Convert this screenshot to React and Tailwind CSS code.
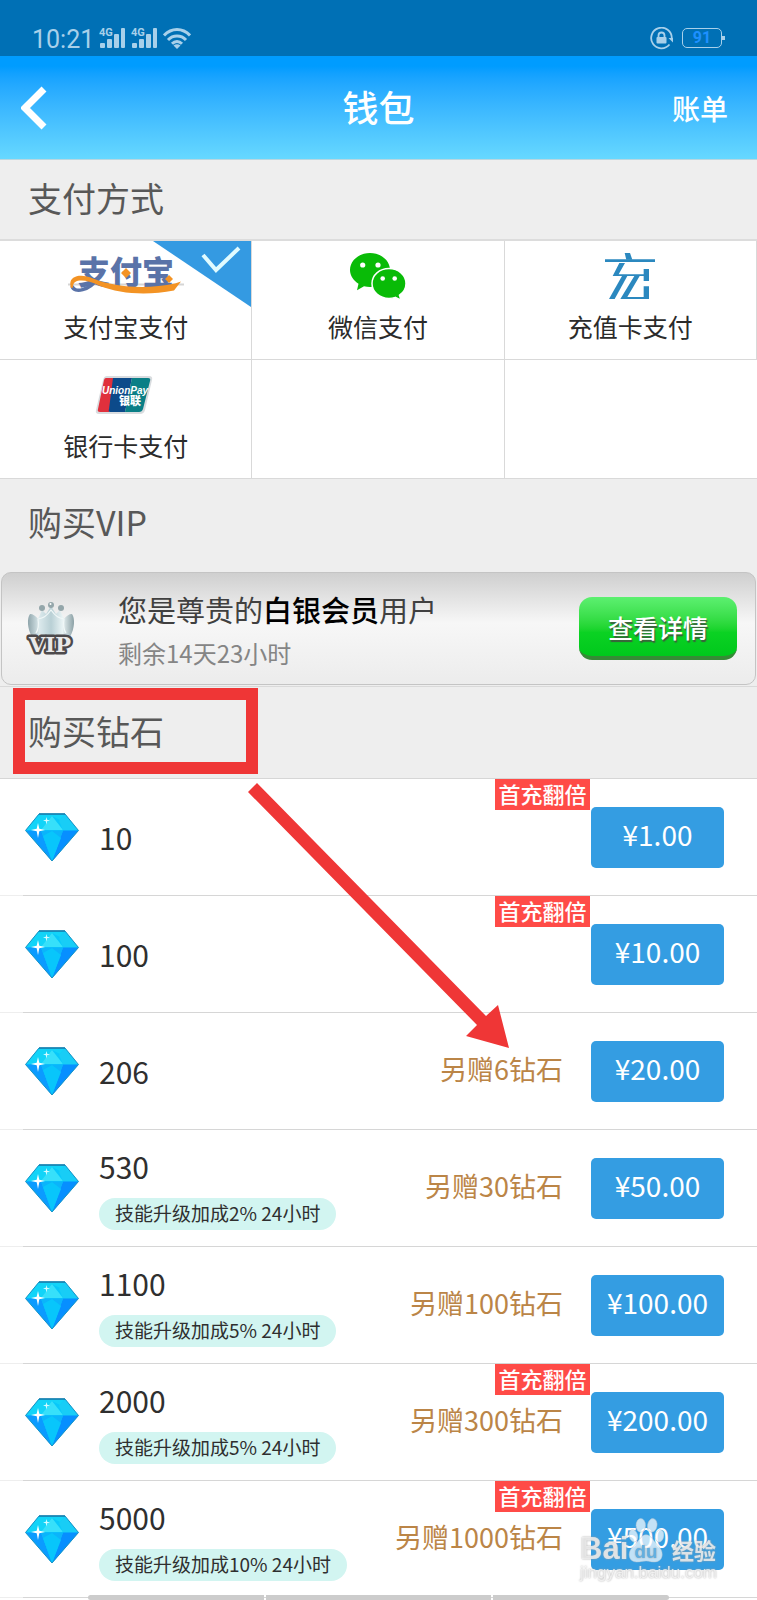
import { useState } from 'react';

const PACKAGES = [
  { amount: 10, price: '1.00', double: true },
  { amount: 100, price: '10.00', double: true },
  { amount: 206, price: '20.00', gift: 6 },
  { amount: 530, price: '50.00', gift: 30, boost: 2 },
  { amount: 1100, price: '100.00', gift: 100, boost: 5 },
  { amount: 2000, price: '200.00', gift: 300, boost: 5, double: true },
  { amount: 5000, price: '500.00', gift: 1000, boost: 10, double: true },
];

function Signal() {
  return (
    <svg width="27" height="21" viewBox="0 0 27 21" fill="currentColor" aria-hidden="true">
      <text x="0" y="8" fontSize="11" fontWeight="700" fontFamily="Roboto, sans-serif">4G</text>
      <rect x="1" y="15" width="5" height="5" rx="1" />
      <rect x="8" y="11" width="5" height="9" rx="1" />
      <rect x="15" y="6" width="5" height="14" rx="1" />
      <rect x="22" y="0" width="4" height="20" rx="1" />
    </svg>
  );
}

function Wifi() {
  return (
    <svg width="28" height="21" viewBox="0 0 28 21" fill="none" stroke="currentColor" strokeWidth="3" aria-hidden="true">
      <path d="M1 7.500C8.500-.5 19.500-.5 27 7.500" />
      <path d="M5 12c5-5.200 13-5.200 18 0" />
      <path d="M9 15.800c3-3 7-3 10 0" />
      <path d="M10.500 17.500c2-1.600 5-1.600 7 0L14 21z" fill="currentColor" stroke="none" />
    </svg>
  );
}

function RotationLock() {
  return (
    <svg width="23" height="23" viewBox="0 0 23 23" fill="none" stroke="currentColor" aria-hidden="true">
      <path d="M19.500 17.500A10.300 10.300 0 1 1 21.800 11" strokeWidth="1.800" />
      <path d="M18.500 11h4.500v4.500z" fill="currentColor" stroke="none" />
      <path d="M8.500 11V8.500a3 3 0 0 1 6 0V11" strokeWidth="1.800" />
      <rect x="6.500" y="10" width="10" height="6.500" rx="1" fill="currentColor" stroke="none" />
    </svg>
  );
}

function AlipayLogo() {
  return (
    <svg width="116" height="52" viewBox="0 -6 116 52" aria-hidden="true">
      <path d="M0 28.500h116" stroke="#d5d5d5" strokeWidth="2" />
      <text x="10" y="28" fontSize="32" fontWeight="900" fill="#5a73a8" fontFamily="'Noto Sans CJK SC', sans-serif">支付宝</text>
      <path d="M29 23C22 34 6 38 4 30" fill="none" stroke="#5a73a8" strokeWidth="3.500" />
      <path d="M3 32C-1 20 12 17 25 22.500c22 9 54 11 82 5l6-2-7 9c-26 5-53 4-75-5-14-7-27-7-26 2z" fill="#f39324" />
      <path d="M58 12l5 5-5 5-5-5zM101 19l4 4-4 4-4-4z" fill="#f39324" />
    </svg>
  );
}

function WechatLogo() {
  return (
    <svg width="58" height="48" viewBox="348 251 58 48" aria-hidden="true">
      <path d="M369 252c11 0 20 7.500 20 17s-9 17-20 17c-2 0-4-.2-6-.8l-7 4 1.500-6.500c-5-3-8.500-8-8.500-13.700 0-9.500 9-17 20-17z" fill="#09bb07" />
      <path d="M388 267.500c9.500 0 17 6.600 17 15 0 4.800-2.500 9-6.500 11.700l1.500 5-5.700-2.800c-2 .7-4.200 1.100-6.300 1.100-9.500 0-17-6.600-17-15s7.500-15 17-15z" fill="#09bb07" stroke="#fff" strokeWidth="1.500" />
      <circle cx="361.700" cy="264" r="2.600" fill="#fff" />
      <circle cx="377" cy="264" r="2.600" fill="#fff" />
      <circle cx="381.700" cy="277.500" r="2.300" fill="#fff" />
      <circle cx="393.700" cy="277.500" r="2.300" fill="#fff" />
    </svg>
  );
}

function CardLogo() {
  return (
    <svg width="50" height="46" viewBox="684 48 150 138" fill="#2b88bf" aria-hidden="true">
      <path d="M743 48h16l7 20h-18z" />
      <path d="M684 67h150v8H684z" />
      <path d="M727 78h17l-19 34h75V96h16v36h-16v-15h-93z" />
      <path d="M735 117h16l-38 69h-17z" />
      <path d="M772 117h16l-37 63h49v-32h16v38h-86z" />
    </svg>
  );
}

function UnionPayLogo() {
  return (
    <svg width="58" height="38" viewBox="0 0 58 38" className="mr-1" aria-hidden="true">
      <path d="M12 0h42q4 0 3 4l-7 30q-1 4-5 4H4q-4 0-3-4L8 4q1-4 4-4z" fill="#d9dcdf" />
      <path d="M11 2h10l-7 34H5q-3 0-2-3L9 4q.5-2 2-2z" fill="#e0303c" />
      <path d="M18 2h19l-7 34H15q-2 0-1-3z" fill="#0c4a8a" />
      <path d="M37 2h16q3 0 2 3l-7 28q-1 3-4 3H30z" fill="#0a7f86" />
      <text x="7" y="18" fontSize="10" fontWeight="700" fontStyle="italic" fill="#fff" fontFamily="'Liberation Sans', sans-serif">UnionPay</text>
      <text x="24" y="29" fontSize="11" fontWeight="900" fill="#fff" fontFamily="'Noto Sans CJK SC', sans-serif">银联</text>
    </svg>
  );
}

function CrownIcon() {
  return (
    <svg width="52" height="56" viewBox="0 0 52 56" className="shrink-0" aria-hidden="true">
      <defs>
        <linearGradient id="crown" x1="0" x2="1" y1="0" y2="0">
          <stop offset="0" stopColor="#8fa5ab" />
          <stop offset=".25" stopColor="#dbe9ec" />
          <stop offset=".5" stopColor="#b9d0d5" />
          <stop offset=".75" stopColor="#e9f3f4" />
          <stop offset="1" stopColor="#8ba0a5" />
        </linearGradient>
      </defs>
      <path d="M8 36C3 27 3 17 6 13c3 0 6 2 8 5l4-9 4 4 5-8 5 8 4-4 4 9c2-3 5-5 8-5 3 4 3 14-2 23z" fill="url(#crown)" />
      <path d="M14 18c1 6 0 11-2 14M40 18c-1 6 0 11 2 14M14 18c5-1 8-2 13-9 5 7 8 8 13 9" stroke="#f1f8f8" strokeWidth="1.200" fill="none" />
      <circle cx="18" cy="7" r="3" fill="#94a6aa" />
      <circle cx="27" cy="4" r="3" fill="#94a6aa" />
      <circle cx="37" cy="7" r="3" fill="#94a6aa" />
      <circle cx="26.500" cy="3" r="1" fill="#fff" />
      <text x="26" y="51" textAnchor="middle" fontSize="21" fontWeight="700" fill="#e9e9e9" stroke="#4d4a4c" strokeWidth="5" strokeLinejoin="round" paintOrder="stroke" fontFamily="'DejaVu Serif', serif">VIP</text>
    </svg>
  );
}

function Diamond() {
  return (
    <svg width="54" height="49" viewBox="0 0 54 49" className="shrink-0" aria-hidden="true">
      <path d="M14 1h26l13.500 16.500L27 48 .5 17.500z" fill="#08c8fa" />
      <path d="M14 1h26l-5 6-8-4-11 14H1z" fill="#12d4f8" />
      <path d="M27 3l11 14H16z" fill="#37e0fa" />
      <path d="M40 1l13 16.500H38L34 8z" fill="#18cdf6" />
      <path d="M1 17.500h15L27 48z" fill="#0b9bff" />
      <path d="M38 17.500h15.500L27 48z" fill="#078fff" />
      <path d="M16 17.500h22L27 48z" fill="#0bb4fb" />
      <path d="M27 18l9 7-9 23-9-25z" fill="#08c6fb" />
      <path d="M14 1h26l13.500 16.500L27 48 .5 17.500z" fill="none" stroke="#1b93c4" strokeWidth="1" />
      <path d="M14 1h26" stroke="#177fae" strokeWidth="1.500" />
      <path d="M13 10l1.300 5.700L20 17l-5.700 1.300L13 25l-1.300-6.700L6 17l5.700-1.300z" fill="#fff" />
      <path d="M21.500 4l.7 2.800L25 7.500l-2.800.7-.7 3.300-.7-3.300-2.800-.7 2.800-.7z" fill="#d8fbff" />
    </svg>
  );
}

const METHODS = [
  { id: 'alipay', label: '支付宝支付', Logo: AlipayLogo },
  { id: 'wechat', label: '微信支付', Logo: WechatLogo },
  { id: 'card', label: '充值卡支付', Logo: CardLogo },
  { id: 'bank', label: '银行卡支付', Logo: UnionPayLogo },
];

function StatusBar() {
  return (
    <div className="h-14 bg-[#0070b5] pt-[22px] px-8 flex items-start justify-between text-[#a8d0ea]">
      <div className="h-8 flex items-center gap-[5px]">
        <span className="font-[Roboto] text-[25px] leading-8 pt-1">10:21</span>
        <Signal />
        <Signal />
        <Wifi />
      </div>
      <div className="h-8 flex items-center gap-[9px]">
        <RotationLock />
        <div className="flex items-center">
          <span className="w-10 h-5 rounded-[5px] border border-[#a8d0ea] flex items-center justify-center font-[Roboto] font-bold text-base leading-4 text-[#1e90ff]">
            91
          </span>
          <span className="w-[3px] h-1 bg-[#a8d0ea]" />
        </div>
      </div>
    </div>
  );
}

function PackageRow({ item }) {
  return (
    <li className="bg-white">
      <div className="relative h-[116px] pl-[25px] pr-[33px] flex items-center">
        <Diamond />
        <div className="flex-1 pl-5 flex flex-col items-start">
          <span className="text-[30px] leading-10 text-[#2f2f2f]">{item.amount}</span>
          {item.boost && (
            <span className="mt-3 h-8 px-4 rounded-full bg-[#d2f5f1] text-[19px] leading-[30px] text-[#2f2f2f] whitespace-nowrap">
              技能升级加成{item.boost}% 24小时
            </span>
          )}
        </div>
        {item.gift && (
          <span className="mr-7 pb-1 text-[27px] leading-9 text-[#bb8547] whitespace-nowrap">另赠{item.gift}钻石</span>
        )}
        <button type="button" className="w-[133px] h-[61px] rounded-[5px] bg-[#349de2] text-[28px] leading-9 text-white pb-[6px]">
          ¥{item.price}
        </button>
        {item.double && (
          <span className="absolute top-0 right-[167px] w-[95px] h-[31px] bg-[#ff4b47] text-[22px] leading-7 font-medium text-center text-white whitespace-nowrap">
            首充翻倍
          </span>
        )}
      </div>
      <div className="h-px flex">
        <span className="w-[23px] bg-[#eeeeee]" />
        <span className="flex-1 bg-[#d6d6d6]" />
      </div>
    </li>
  );
}

export default function App() {
  const [method, setMethod] = useState('alipay');

  return (
    <div className="relative min-h-screen bg-white font-['Noto_Sans_CJK_SC',sans-serif]">
      <StatusBar />

      <header className="h-[104px] px-[21px] grid grid-cols-3 items-center bg-linear-to-b from-[#009cff] from-10% to-[#66d8ff] border-b border-[#b9d7e0] text-white">
        <button type="button" aria-label="返回" className="justify-self-start">
          <svg width="26" height="44" viewBox="0 0 26 44" fill="none" stroke="#fff" strokeWidth="7">
            <path d="M23 3L4 22l19 19" />
          </svg>
        </button>
        <h1 className="pb-1 text-4xl font-medium text-center">钱包</h1>
        <button type="button" className="justify-self-end mr-2 text-[28px] leading-10 font-medium">账单</button>
      </header>

      <main>
        <h2 className="h-[81px] pl-7 pb-1 flex items-center bg-[#eeeeee] border-b-2 border-[#dcdcdc] text-[34px] leading-10 text-[#585858]">
          支付方式
        </h2>

        {/* Payment methods */}
        <div className="grid grid-cols-3">
          {METHODS.map(({ id, label, Logo }) => (
            <button
              key={id}
              type="button"
              aria-pressed={method === id}
              onClick={() => setMethod(id)}
              className="relative h-[119px] pb-1 flex flex-col items-center border-r border-b border-[#d9d9d9]"
            >
              <span className="h-[70px] flex items-center">
                <Logo />
              </span>
              <span className="text-[25px] leading-[30px] text-[#2b2b2b]">{label}</span>
              {method === id && (
                <svg width="98" height="66" viewBox="0 0 98 66" className="absolute top-0 right-0" aria-hidden="true">
                  <path d="M0 0h98v66z" fill="#349ae2" />
                  <path d="M50 14l13 15 23-22" fill="none" stroke="#e0fbff" strokeWidth="4" />
                </svg>
              )}
            </button>
          ))}
          <div className="border-r border-b border-[#d9d9d9]" />
          <div className="border-b border-[#d9d9d9]" />
        </div>

        <h2 className="h-[93px] pl-7 pb-2 flex items-center bg-[#eeeeee] text-[34px] leading-10 text-[#585858]">
          购买VIP
        </h2>

        {/* Membership card */}
        <section className="bg-[#eeeeee] pb-px border-b border-[#d9d9d9]">
          <div className="h-[113px] mx-px pl-[22px] pr-[18px] flex items-center rounded-[10px] border border-[#c4c4c4] bg-linear-to-b from-[#cfcfcf] via-[#f7f7f7] via-45% to-[#ececec]">
            <CrownIcon />
            <div className="flex-1 pl-[42px] pt-1">
              <p className="text-[29px] leading-10 text-[#404040] whitespace-nowrap">
                您是尊贵的<span className="font-medium text-black">白银会员</span>用户
              </p>
              <p className="mt-1 text-2xl leading-10 text-[#858585] whitespace-nowrap">剩余14天23小时</p>
            </div>
            <button
              type="button"
              className="w-[158px] h-[63px] rounded-[13px] border-b-4 border-[#368a36] bg-linear-to-b from-[#5cf070] via-[#0bd223] via-60% to-[#00c81c] text-[25px] leading-9 font-medium text-white text-shadow-[1px_2px_1px_#3d5c3d]"
            >
              查看详情
            </button>
          </div>
        </section>

        <div className="relative bg-[#eeeeee] border-b border-[#d6d6d6]">
          <h2 className="h-[91px] pl-7 pb-1 flex items-center text-[34px] leading-10 text-[#585858]">购买钻石</h2>
          {/* Guide frame and arrow drawn over the list */}
          <div className="absolute left-[13px] top-px w-[245px] h-[86px] border-[12px] border-[#ef3636] z-10 pointer-events-none" />
          <svg width="262" height="266" viewBox="0 0 262 266" className="absolute left-[248px] top-[96px] z-10 pointer-events-none" aria-hidden="true">
            <path d="M9 0l229 233 12-11 11 43-43-12 11-11L0 9z" fill="#ef3636" />
          </svg>
        </div>

        {/* Diamond packages */}
        <ul>
          {PACKAGES.map((item) => (
            <PackageRow key={item.amount} item={item} />
          ))}
        </ul>
      </main>

      <div className="fixed bottom-0 inset-x-0 px-[88px] h-[5px] flex gap-[2px]">
        <span className="flex-[176] rounded-l-full bg-[#cccccc]" />
        <span className="flex-[225] bg-[#cccccc]" />
        <span className="flex-[176] rounded-r-full bg-[#cccccc]" />
      </div>

      {/* Watermark */}
      <div className="fixed bottom-[17px] right-[41px] w-[136px] pointer-events-none text-white/70 text-shadow-[0_0_2px_#a0a0a0]">
        <div className="flex items-end justify-between leading-7">
          <span className="flex items-end font-['Liberation_Sans'] font-bold text-[31px]">
            Bai
            <svg width="36" height="46" viewBox="0 0 34 44" aria-hidden="true">
              <g fill="#fff" fillOpacity=".7" stroke="#b5c4cf" strokeWidth=".5">
                <ellipse cx="5" cy="18" rx="4" ry="6" transform="rotate(-15 5 18)" />
                <ellipse cx="12" cy="8" rx="4.500" ry="6.500" />
                <ellipse cx="23" cy="8" rx="4.500" ry="6.500" transform="rotate(10 23 8)" />
                <ellipse cx="30" cy="18" rx="4" ry="6" transform="rotate(10 30 18)" />
                <path d="M17 17c5 0 7 6 12 11 6 6 4 15-4 15-4 0-5-1-8-1s-5 1-9 1c-8 0-9-9-4-14 5-4 8-12 13-12z" />
              </g>
              <text x="17" y="39" textAnchor="middle" fontSize="18" fontWeight="700" fill="#62afe0" stroke="none" fontFamily="'Liberation Sans', sans-serif">du</text>
            </svg>
          </span>
          <span className="text-[22px] font-bold">经验</span>
        </div>
        <div className="font-['Liberation_Sans'] text-[17px] leading-5 whitespace-nowrap">jingyan.baidu.com</div>
      </div>
    </div>
  );
}
